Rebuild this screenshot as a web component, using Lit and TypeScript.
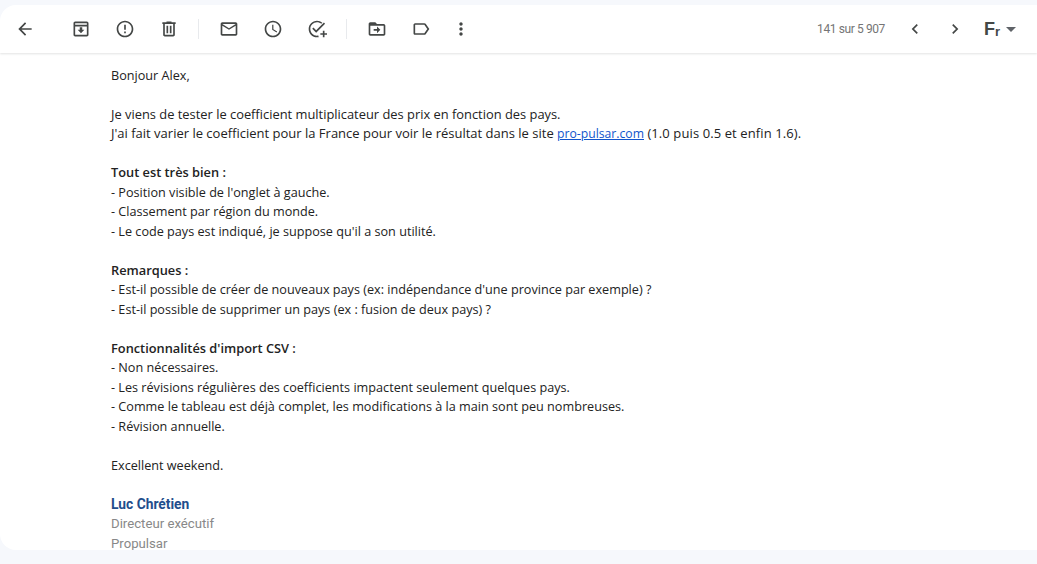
import { LitElement, html, css, svg } from "lit";
import { customElement } from "lit/decorators.js";

const icons = {
  back: "M20 11H7.83l5.59-5.59L12 4l-8 8 8 8 1.41-1.41L7.83 13H20v-2z",
  archive:
    "M19 3H5c-1.1 0-2 .9-2 2v14c0 1.1.9 2 2 2h14c1.1 0 2-.9 2-2V5c0-1.1-.9-2-2-2zM5 5h14v2H5V5zm0 14V9h14v10H5zm8.5-9h-3v3H8l4 4 4-4h-2.5v-3z",
  report:
    "M11 15h2v2h-2zm0-8h2v6h-2zm.99-5C6.47 2 2 6.48 2 12s4.47 10 9.99 10C17.52 22 22 17.52 22 12S17.52 2 11.99 2zM12 20c-4.42 0-8-3.58-8-8s3.58-8 8-8 8 3.58 8 8-3.58 8-8 8z",
  trash:
    "M15 4V3H9v1H4v2h1v13c0 1.1.9 2 2 2h10c1.1 0 2-.9 2-2V6h1V4h-5zm2 15H7V6h10v13zM9 8h2v9H9zm4 0h2v9h-2z",
  mail: "M22 6c0-1.1-.9-2-2-2H4c-1.1 0-2 .9-2 2v12c0 1.1.9 2 2 2h16c1.1 0 2-.9 2-2V6zm-2 0l-8 5-8-5h16zm0 12H4V8l8 5 8-5v10z",
  clock:
    "M11.99 2C6.47 2 2 6.48 2 12s4.47 10 9.99 10C17.52 22 22 17.52 22 12S17.52 2 11.99 2zM12 20c-4.42 0-8-3.58-8-8s3.58-8 8-8 8 3.58 8 8-3.58 8-8 8zm.5-13H11v6l5.25 3.15.75-1.23-4.5-2.67z",
  task: "M12 2C6.48 2 2 6.48 2 12s4.48 10 10 10c.7 0 1.38-.07 2.03-.21l-.43-1.95c-.51.1-1.05.16-1.6.16-4.42 0-8-3.58-8-8s3.58-8 8-8c1.9 0 3.64.66 5 1.77l1.42-1.42C16.65 3 14.43 2 12 2zm8.3 2.3L11 13.6l-3.3-3.3-1.4 1.4 4.7 4.7L21.7 5.7l-1.4-1.4zM19 14v3h-3v2h3v3h2v-3h3v-2h-3v-3h-2z",
  folder:
    "M20 6h-8l-2-2H4c-1.1 0-2 .9-2 2v12c0 1.1.9 2 2 2h16c1.1 0 2-.9 2-2V8c0-1.1-.9-2-2-2zm0 12H4V8h16v10zm-8-1l4-4-4-4v3H8v2h4v3z",
  label:
    "M17.63 5.84C17.27 5.33 16.67 5 16 5L5 5.01C3.9 5.01 3 5.9 3 7v10c0 1.1.9 1.99 2 1.99L16 19c.67 0 1.27-.33 1.63-.84L22 12l-4.37-6.16zM16 17H5V7h11l3.55 5L16 17z",
  more: "M12 8c1.1 0 2-.9 2-2s-.9-2-2-2-2 .9-2 2 .9 2 2 2zm0 2c-1.1 0-2 .9-2 2s.9 2 2 2 2-.9 2-2-.9-2-2-2zm0 6c-1.1 0-2 .9-2 2s.9 2 2 2 2-.9 2-2-.9-2-2-2z",
  prev: "M15.41 7.41L14 6l-6 6 6 6 1.41-1.41L10.83 12z",
  next: "M10 6L8.59 7.41 13.17 12l-4.58 4.59L10 18l6-6z",
};

const paragraphs = [
  { lines: ["Bonjour Alex,"] },
  {
    intro: true,
    lines: [
      "Je viens de tester le coefficient multiplicateur des prix en fonction des pays.",
      html`<span class="long">J'ai fait varier le coefficient pour la France pour voir le résultat dans le site <a href="#">pro-pulsar.com</a> <span class="tail">(1.0 puis 0.5 et enfin 1.6).</span></span>`,
    ],
  },
  {
    title: "Tout est très bien :",
    lines: [
      "- Position visible de l'onglet à gauche.",
      "- Classement par région du monde.",
      "- Le code pays est indiqué, je suppose qu'il a son utilité.",
    ],
  },
  {
    title: "Remarques :",
    lines: [
      "- Est-il possible de créer de nouveaux pays (ex: indépendance d'une province par exemple) ?",
      "- Est-il possible de supprimer un pays (ex : fusion de deux pays) ?",
    ],
  },
  {
    title: "Fonctionnalités d'import CSV :",
    lines: [
      "- Non nécessaires.",
      "- Les révisions régulières des coefficients impactent seulement quelques pays.",
      "- Comme le tableau est déjà complet, les modifications à la main sont peu nombreuses.",
      "- Révision annuelle.",
    ],
  },
  { lines: ["Excellent weekend."] },
];

@customElement("app-root")
export class AppRoot extends LitElement {
  static styles = css`
    :host {
      display: block;
      height: 564px;
      background: #f6f8fc;
      padding-top: 5px;
      box-sizing: border-box;
      overflow: hidden;
    }

    .card {
      height: 545px;
      background: #fff;
      border-radius: 16px 0 0 16px;
      overflow: hidden;
    }

    .toolbar {
      height: 48px;
      display: flex;
      align-items: center;
      padding-left: 5px;
      box-shadow: 0 1px 2px rgba(60, 64, 67, 0.15);
      position: relative;
    }

    .group {
      display: flex;
      gap: 4px;
    }

    .first {
      margin-left: 16px;
    }

    .sep {
      width: 1px;
      height: 20px;
      background: #e8eaed;
      margin: 0 10px 0 9px;
    }

    .btn {
      width: 40px;
      height: 40px;
      display: flex;
      align-items: center;
      justify-content: center;
    }

    .btn svg {
      width: 20px;
      height: 20px;
      fill: #444746;
    }

    .right {
      margin-left: auto;
      display: flex;
      align-items: center;
    }

    .count {
      font: 12px Roboto, sans-serif;
      letter-spacing: -0.4px;
      color: #757575;
      margin-right: 10px;
    }

    .lang {
      display: flex;
      align-items: center;
      margin: 0 21px 0 9px;
      color: #444746;
      font: 700 18px "Liberation Sans", sans-serif;
    }

    .lang small {
      font-size: 13px;
      margin-top: 4px;
    }

    .caret {
      width: 0;
      height: 0;
      border: 5px solid transparent;
      border-top-color: #5f6368;
      border-bottom: 0;
      margin-left: 6px;
    }

    .body {
      padding: 12.75px 0 0 111px;
      font: 12.65px/19.5px "Open Sans", sans-serif;
      color: #222;
    }

    .para {
      margin-bottom: 19.5px;
    }

    .para b {
      font-weight: 600;
      font-size: 12.8px;
      display: block;
    }

    .para div {
      white-space: nowrap;
    }

    .intro {
      font-size: 12.88px;
    }

    .long {
      font-size: 13px;
    }

    .tail {
      letter-spacing: 0.1px;
    }

    a {
      color: #1155cc;
      font-size: 12.2px;
    }

    .sig {
      font: 13.2px/19.5px Roboto, sans-serif;
      color: #888;
    }

    .sig b {
      display: block;
      font-size: 13.8px;
      color: #1f4e8c;
    }

    .sig span {
      display: block;
    }
  `;

  icon(name: keyof typeof icons) {
    return html`<div class="btn">
      <svg viewBox="0 0 24 24">${svg`<path d=${icons[name]}></path>`}</svg>
    </div>`;
  }

  render() {
    return html`
      <div class="card">
        <div class="toolbar">
          ${this.icon("back")}
          <div class="group first">
            ${this.icon("archive")} ${this.icon("report")} ${this.icon("trash")}
          </div>
          <div class="sep"></div>
          <div class="group">
            ${this.icon("mail")} ${this.icon("clock")} ${this.icon("task")}
          </div>
          <div class="sep"></div>
          <div class="group">${this.icon("folder")} ${this.icon("label")}</div>
          ${this.icon("more")}
          <div class="right">
            <span class="count">141 sur 5 907</span>
            ${this.icon("prev")} ${this.icon("next")}
            <div class="lang">F<small>r</small><span class="caret"></span></div>
          </div>
        </div>
        <div class="body">
          ${paragraphs.map(
            (p) => html`<div class="para ${p.intro ? "intro" : ""}">
              ${p.title ? html`<b>${p.title}</b>` : ""}
              ${p.lines.map((l) => html`<div>${l}</div>`)}
            </div>`
          )}
          <div class="sig">
            <b>Luc Chrétien</b>
            <span>Directeur exécutif</span>
            <span>Propulsar</span>
          </div>
        </div>
      </div>
    `;
  }
}
